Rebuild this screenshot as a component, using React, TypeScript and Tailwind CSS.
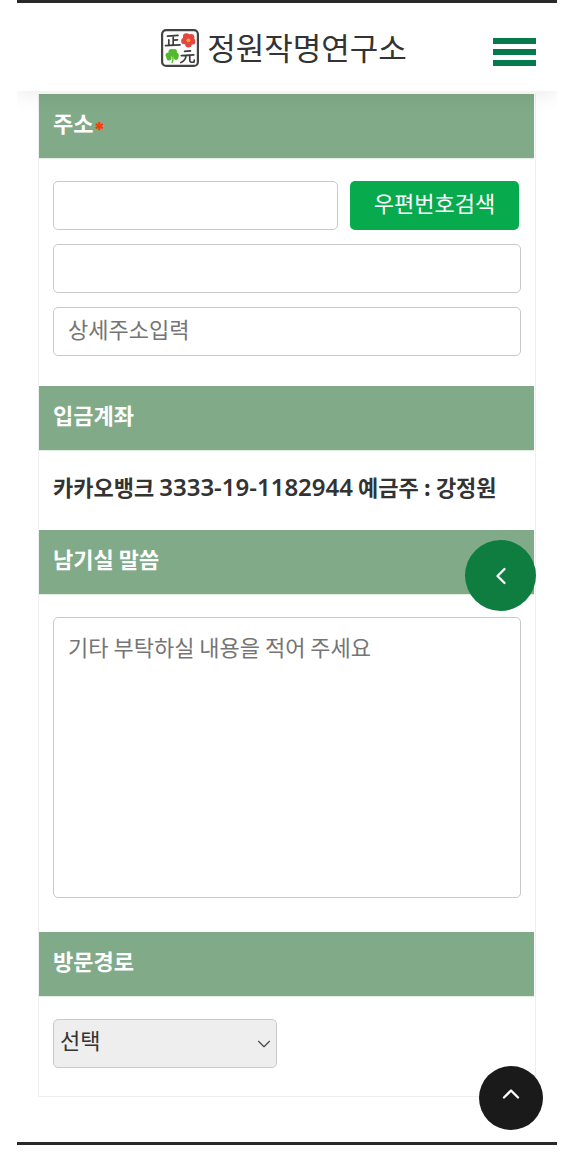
import type { ReactNode } from 'react';
import { ChevronDown, ChevronLeft, ChevronUp } from 'lucide-react';

const FIELD =
  'block h-[49px] w-full min-w-0 rounded-[5px] border border-[#c9c9c9] bg-white px-3.5 pb-2 text-[22px] text-[#333] outline-none placeholder:text-[#757575] placeholder:opacity-100';

function Band({ children, htmlFor }: { children: ReactNode; htmlFor?: string }) {
  const style =
    'block h-[65px] border-b border-[#e3eee5] bg-[#80aa88] px-3.5 pt-2.5 text-[22px] leading-9 font-bold text-white';
  return htmlFor ? (
    <label htmlFor={htmlFor} className={style}>
      {children}
    </label>
  ) : (
    <h2 className={style}>{children}</h2>
  );
}

function LogoMark() {
  return (
    <svg viewBox="0 0 38 38" className="h-[38px] w-[38px] shrink-0" aria-hidden="true">
      <rect x="1.1" y="1.1" width="35.8" height="35.8" rx="4" fill="#fff" stroke="#444" strokeWidth="2.2" />
      <g fill="none" stroke="#3c3c3c" strokeWidth="1.7" strokeLinecap="round" strokeLinejoin="round">
        <path d="M6.5 7.2L17 6.4M12.2 7V16M12.2 11.2L16.5 10.8M7.8 10.8V16M4.5 16.6L19 15.8" />
        <path d="M23.5 22.3L29.5 21.8M20.3 26.6L32.8 25.8M25 26.5C24.8 30 23 32.3 19.8 33.5M28.8 26.3V31.5C28.8 33.2 30 33.4 33 33.2L33.3 31" />
      </g>
      <g fill="#e4473f">
        <circle cx="25.3" cy="7.7" r="3.4" />
        <circle cx="30" cy="8.3" r="3.4" />
        <circle cx="31.2" cy="12.4" r="3.2" />
        <circle cx="27.5" cy="15.3" r="3.3" />
        <circle cx="23.5" cy="12" r="3.3" />
      </g>
      <circle cx="27.4" cy="11.3" r="1.9" fill="#f9a23c" />
      <g fill="#55b92d">
        <circle cx="10.2" cy="22.8" r="2.7" />
        <circle cx="13.3" cy="22.8" r="2.7" />
        <circle cx="7.4" cy="26.3" r="2.8" />
        <circle cx="8" cy="29" r="2.5" />
        <circle cx="15.1" cy="26.2" r="2.7" />
        <circle cx="15" cy="28.5" r="2.4" />
        <circle cx="11.5" cy="26" r="2" />
      </g>
      <path d="M11.6 26Q12.6 30 11.2 33.6" fill="none" stroke="#55b92d" strokeWidth="1.4" strokeLinecap="round" />
    </svg>
  );
}

export default function App() {
  return (
    <div className="bg-white pr-[25px] pb-2 pl-[17px] font-['Noto_Sans_CJK_KR',sans-serif] text-[#333]">
      <div className="relative overflow-hidden border-t-3 border-b-3 border-[#29282b]">
        <header className="relative z-10 grid h-[88px] grid-cols-[1fr_auto_1fr] items-center bg-white px-[21px] shadow-[0_4px_20px_rgba(0,0,0,0.08)]">
          <a href="#" className="col-start-2 flex items-center gap-2 pt-0.5 pr-1.5">
            <LogoMark />
            <span className="pb-0.5 text-[31px] leading-10 text-[#333]">정원작명연구소</span>
          </a>
          <button type="button" aria-label="메뉴" className="flex w-[43px] flex-col gap-[5px] justify-self-end pt-2.5">
            <span className="h-1.5 bg-[#08784d]" />
            <span className="h-1.5 bg-[#08784d]" />
            <span className="h-1.5 bg-[#08784d]" />
          </button>
        </header>

        <main className="px-[21px] pt-[3px] pb-[45px]">
          <form className="border-x border-b border-[#eee]" onSubmit={(e) => e.preventDefault()}>
            <div className="mr-px">
              <Band htmlFor="postcode">
                주소
                <span className="align-sub font-[Inter,sans-serif] text-xl leading-none font-black text-[#ff3b00]">*</span>
              </Band>
            </div>
            <div className="flex flex-col gap-3.5 px-3.5 pt-[22px] pb-[30px]">
              <div className="flex gap-3 pr-0.5">
                <input id="postcode" type="text" className={FIELD} />
                <button type="button" className="h-[49px] w-[169px] shrink-0 rounded-[5px] bg-[#08aa4e] pb-1.5 text-[22px] text-white">
                  우편번호검색
                </button>
              </div>
              <input type="text" aria-label="기본주소" className={FIELD} />
              <input type="text" aria-label="상세주소" placeholder="상세주소입력" className={FIELD} />
            </div>

            <div className="mr-px">
              <Band>입금계좌</Band>
            </div>
            <p className="h-[79px] px-3.5 pt-[17px] text-[22px] leading-9 font-bold whitespace-nowrap">
              카카오뱅크 <span className="font-['Noto_Sans',sans-serif] text-2xl leading-9 font-semibold">3333-19-1182944</span> 예금주 : 강정원
            </p>

            <div className="mr-px">
              <Band htmlFor="message">남기실 말씀</Band>
            </div>
            <div className="px-3.5 pt-[22px] pb-[34px]">
              <textarea
                id="message"
                placeholder="기타 부탁하실 내용을 적어 주세요"
                className="block h-[281px] w-full resize-none rounded-[5px] border border-[#c9c9c9] bg-white px-3.5 py-2.5 text-[22px] leading-9 outline-none placeholder:text-[#757575] placeholder:opacity-100"
              />
            </div>

            <div className="mr-px">
              <Band htmlFor="route">방문경로</Band>
            </div>
            <div className="px-3.5 pt-[22px] pb-[28px]">
              <div className="relative w-56">
                <select
                  id="route"
                  className="block h-[49px] w-full appearance-none rounded-[5px] border border-[#c9c9c9] bg-[#eee] px-1.5 pb-2 text-[22px] text-[#333] outline-none"
                >
                  <option>선택</option>
                </select>
                <ChevronDown
                  className="pointer-events-none absolute top-3.5 right-0.5 h-[22px] w-[22px] text-[#444]"
                  strokeWidth={1.2}
                />
              </div>
            </div>
          </form>
        </main>

        <button
          type="button"
          aria-label="퀵메뉴 열기"
          className="absolute top-[537px] right-[21px] z-20 flex h-[71px] w-[71px] items-center justify-center rounded-full bg-[#0f7c40] text-white"
        >
          <ChevronLeft className="h-7 w-7" strokeWidth={2} />
        </button>
        <button
          type="button"
          aria-label="맨 위로"
          className="absolute right-3.5 bottom-3 z-20 flex h-16 w-16 items-center justify-center rounded-full bg-[#1a1a1a] pb-2 text-white"
        >
          <ChevronUp className="h-7 w-7" strokeWidth={2} />
        </button>
      </div>
    </div>
  );
}
